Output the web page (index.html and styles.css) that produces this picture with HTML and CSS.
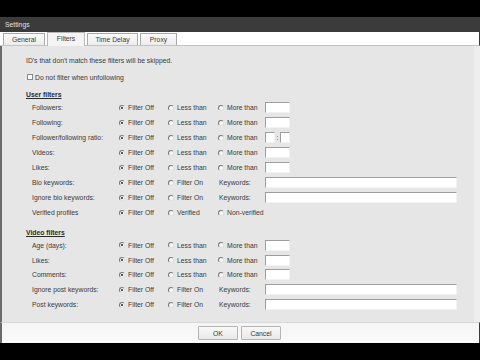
FILE: index.html
```html
<!doctype html>
<html>
  <head>
    <meta charset="UTF-8" />
    <title>Settings</title>
    <link rel="stylesheet" href="styles.css">
  </head>
  <body>
    <div class="window">
      <div class="titlebar">Settings</div>

      <div class="tabs">
        <div class="tab tab-general">General</div>
        <div class="tab tab-filters active">Filters</div>
        <div class="tab tab-delay">Time Delay</div>
        <div class="tab tab-proxy">Proxy</div>
      </div>

      <div class="panel">
        <p class="intro">ID's that don't match these filters will be skipped.</p>
        <label class="check"><span class="box"></span>Do not filter when unfollowing</label>

        <h2 class="section">User filters</h2>
        <div class="rows">
          <div class="row">
            <span>Followers:</span>
            <span class="opt"><i class="radio on"></i>Filter Off</span>
            <span class="opt"><i class="radio"></i>Less than</span>
            <span class="opt"><i class="radio"></i>More than</span>
            <span class="field num"></span>
          </div>
          <div class="row">
            <span>Following:</span>
            <span class="opt"><i class="radio on"></i>Filter Off</span>
            <span class="opt"><i class="radio"></i>Less than</span>
            <span class="opt"><i class="radio"></i>More than</span>
            <span class="field num"></span>
          </div>
          <div class="row">
            <span>Follower/following ratio:</span>
            <span class="opt"><i class="radio on"></i>Filter Off</span>
            <span class="opt"><i class="radio"></i>Less than</span>
            <span class="opt"><i class="radio"></i>More than</span>
            <span class="ratio"><span class="field small"></span><span class="colon">:</span><span class="field small"></span></span>
          </div>
          <div class="row">
            <span>Videos:</span>
            <span class="opt"><i class="radio on"></i>Filter Off</span>
            <span class="opt"><i class="radio"></i>Less than</span>
            <span class="opt"><i class="radio"></i>More than</span>
            <span class="field num"></span>
          </div>
          <div class="row">
            <span>Likes:</span>
            <span class="opt"><i class="radio on"></i>Filter Off</span>
            <span class="opt"><i class="radio"></i>Less than</span>
            <span class="opt"><i class="radio"></i>More than</span>
            <span class="field num"></span>
          </div>
          <div class="row">
            <span>Bio keywords:</span>
            <span class="opt"><i class="radio on"></i>Filter Off</span>
            <span class="opt"><i class="radio"></i>Filter On</span>
            <span class="kw">Keywords:</span>
            <span class="field wide"></span>
          </div>
          <div class="row">
            <span>Ignore bio keywords:</span>
            <span class="opt"><i class="radio on"></i>Filter Off</span>
            <span class="opt"><i class="radio"></i>Filter On</span>
            <span class="kw">Keywords:</span>
            <span class="field wide"></span>
          </div>
          <div class="row">
            <span>Verified profiles</span>
            <span class="opt"><i class="radio on"></i>Filter Off</span>
            <span class="opt"><i class="radio"></i>Verified</span>
            <span class="opt"><i class="radio"></i>Non-verified</span>
          </div>
        </div>

        <h2 class="section video">Video filters</h2>
        <div class="rows video-rows">
          <div class="row">
            <span>Age (days):</span>
            <span class="opt"><i class="radio on"></i>Filter Off</span>
            <span class="opt"><i class="radio"></i>Less than</span>
            <span class="opt"><i class="radio"></i>More than</span>
            <span class="field num"></span>
          </div>
          <div class="row">
            <span>Likes:</span>
            <span class="opt"><i class="radio on"></i>Filter Off</span>
            <span class="opt"><i class="radio"></i>Less than</span>
            <span class="opt"><i class="radio"></i>More than</span>
            <span class="field num"></span>
          </div>
          <div class="row">
            <span>Comments:</span>
            <span class="opt"><i class="radio on"></i>Filter Off</span>
            <span class="opt"><i class="radio"></i>Less than</span>
            <span class="opt"><i class="radio"></i>More than</span>
            <span class="field num"></span>
          </div>
          <div class="row">
            <span>Ignore post keywords:</span>
            <span class="opt"><i class="radio on"></i>Filter Off</span>
            <span class="opt"><i class="radio"></i>Filter On</span>
            <span class="kw">Keywords:</span>
            <span class="field wide"></span>
          </div>
          <div class="row">
            <span>Post keywords:</span>
            <span class="opt"><i class="radio on"></i>Filter Off</span>
            <span class="opt"><i class="radio"></i>Filter On</span>
            <span class="kw">Keywords:</span>
            <span class="field wide"></span>
          </div>
        </div>
      </div>

      <div class="footer">
        <button class="btn">OK</button>
        <button class="btn">Cancel</button>
      </div>
    </div>
  </body>
</html>
```

FILE: styles.css
```css
html,
body {
  margin: 0;
  background-color: #000;
}
body {
  width: 480px;
  height: 360px;
  overflow: hidden;
  font-family: "Liberation Sans", Arial, sans-serif;
  font-size: 6.8px;
  color: #3a3a3a;
}
.window {
  margin-top: 17px;
  width: 480px;
}
.titlebar {
  height: 15px;
  line-height: 15px;
  padding-left: 5px;
  background-color: #3b3b3b;
  color: #e2e2e2;
}
.tabs {
  height: 14px;
  background-color: #fff;
  border-right: 1px solid #3a3a3a;
  border-bottom: 1px solid #c4c4c4;
  display: flex;
  align-items: flex-end;
  padding-left: 3px;
  box-sizing: border-box;
}
.tab {
  height: 12px;
  line-height: 12px;
  box-sizing: border-box;
  border: 1px solid #a9a9a9;
  border-bottom: none;
  background: linear-gradient(#fbfbfb, #ececec);
  text-align: center;
  margin-right: 2px;
}
.tab-general { width: 42px; }
.tab-filters { width: 38px; }
.tab-delay { width: 51px; }
.tab-proxy { width: 37px; }
.tab.active {
  height: 14px;
  line-height: 11px;
  margin-bottom: -1px;
  background: #f4f4f4;
  border-color: #b8b8b8;
}
.panel {
  height: 276px;
  box-sizing: border-box;
  background-color: #e6e6e6;
  border-left: 2px solid #6a6a6a;
  border-right: 6px solid #ededed;
  box-shadow: 1px 0 0 #3a3a3a;
  padding: 10px 0 0 24px;
}
.intro {
  margin: 0;
  height: 10px;
  line-height: 10px;
}
.check {
  display: flex;
  align-items: center;
  height: 10px;
  margin-top: 6px;
  margin-left: 1px;
}
.box {
  width: 6px;
  height: 6px;
  box-sizing: border-box;
  border: 1px solid #8a8a8a;
  background-color: #fff;
  margin-right: 2px;
}
.section {
  margin: 8px 0 0;
  font-size: 6.8px;
  font-weight: bold;
  color: #2a2a2a;
  text-decoration: underline;
  height: 10px;
  line-height: 10px;
}
.section.video {
  margin-top: 8px;
}
.rows {
  padding-left: 6px;
}
.row {
  display: grid;
  grid-template-columns: 87px 49px 50px 47px auto;
  align-items: center;
  height: 15px;
}
.video-rows .row {
  height: 14.8px;
}
.opt {
  display: flex;
  align-items: center;
}
.radio {
  width: 6px;
  height: 6px;
  box-sizing: border-box;
  border-radius: 50%;
  border: 1px solid;
  border-color: #7a7a7a #e0e0e0 #e0e0e0 #7a7a7a;
  background-color: #f7f7f7;
  margin-right: 3px;
  display: flex;
  align-items: center;
  justify-content: center;
}
.radio.on::after {
  content: "";
  width: 2px;
  height: 2px;
  border-radius: 50%;
  background-color: #222;
}
.kw {
  padding-left: 1px;
}
.field {
  display: block;
  height: 11px;
  box-sizing: border-box;
  background-color: #fff;
  border: 1px solid;
  border-color: #9d9d9d #f2f2f2 #f2f2f2 #9d9d9d;
}
.field.num { width: 25px; }
.field.wide { width: 192px; }
.field.small { width: 10px; }
.ratio {
  display: flex;
  align-items: center;
}
.colon {
  width: 5px;
  text-align: center;
}
.footer {
  height: 21px;
  box-sizing: border-box;
  background: linear-gradient(#f5f5f5, #fafafa);
  border-left: 2px solid #6a6a6a;
  border-right: 1px solid #3a3a3a;
  border-top: 1px solid #d8d8d8;
  display: flex;
  justify-content: center;
  align-items: center;
  gap: 3px;
  padding-right: 2px;
}
.btn {
  width: 40px;
  height: 14px;
  padding: 0;
  font-family: inherit;
  font-size: 6.8px;
  color: #3a3a3a;
  border: 1px solid #b4b4b4;
  background: linear-gradient(#f8f8f8, #e9e9e9);
  border-radius: 1px;
}
```
